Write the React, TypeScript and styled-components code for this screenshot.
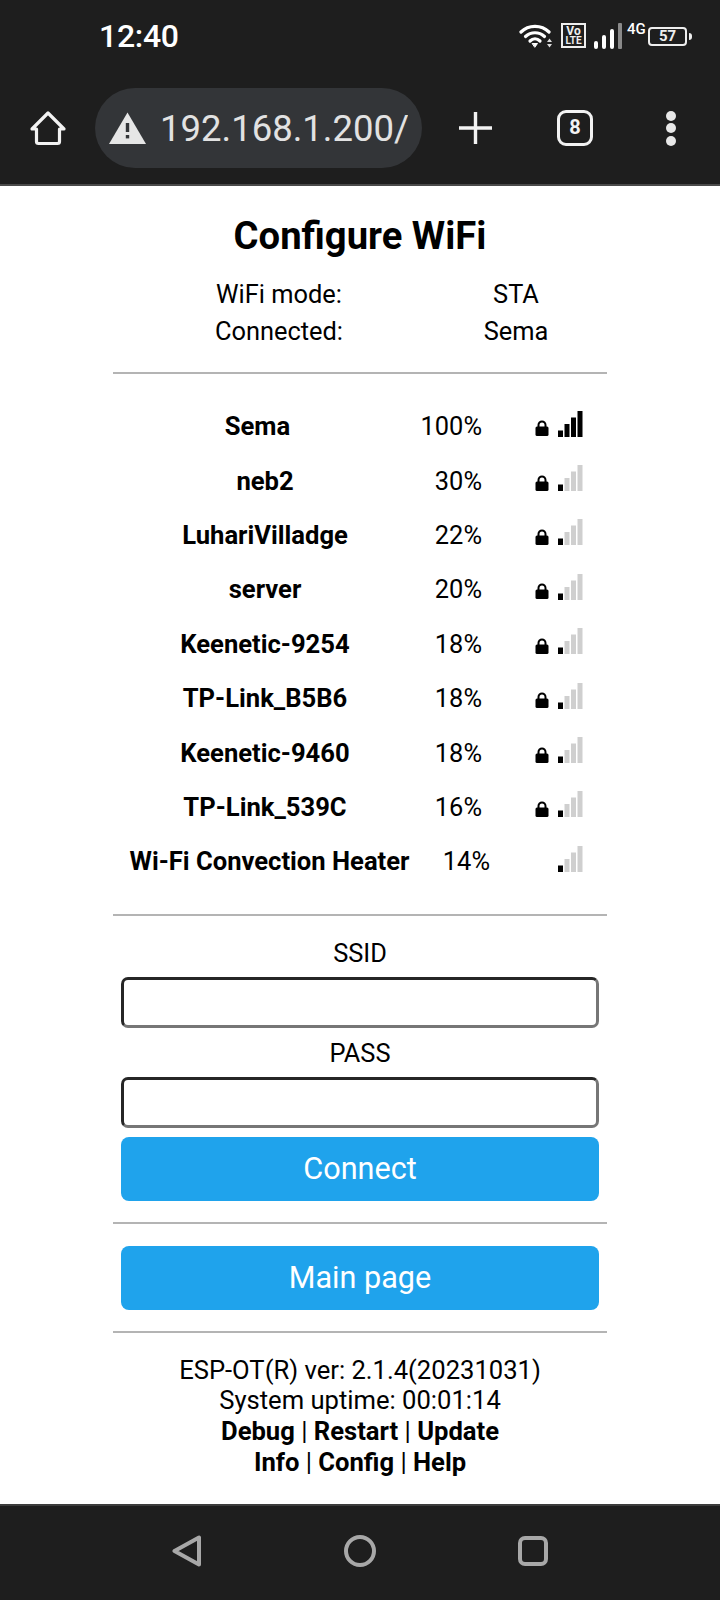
import React from 'react';
import styled, { createGlobalStyle } from 'styled-components';

const networks = [
  { name: 'Sema', level: 100, bars: 4, locked: true, columns: '257px 96px 76px' },
  { name: 'neb2', level: 30, bars: 1, locked: true },
  { name: 'LuhariVilladge', level: 22, bars: 1, locked: true },
  { name: 'server', level: 20, bars: 1, locked: true },
  { name: 'Keenetic-9254', level: 18, bars: 1, locked: true },
  { name: 'TP-Link_B5B6', level: 18, bars: 1, locked: true },
  { name: 'Keenetic-9460', level: 18, bars: 1, locked: true },
  { name: 'TP-Link_539C', level: 16, bars: 1, locked: true },
  { name: 'Wi-Fi Convection Heater', level: 14, bars: 1, locked: false, columns: '281px 80px 68px' },
];

function StatusIcons(): JSX.Element {
  return (
    <StatusRight>
      <WifiIcon width="34" height="24" viewBox="0 0 34 24" fill="none" stroke="#fff" strokeLinecap="round">
        <path d="M2 8C9.5 0.5 22.5 0.5 30 8" strokeWidth="3.2" />
        <path d="M6.5 12.5C12 7.5 20 7.5 25.5 12.5" strokeWidth="3.2" />
        <path d="M11 17C14 14 18 14 21 17" strokeWidth="3.2" />
        <path d="M13.5 19.5h5l-2.5 3.5z" fill="#fff" strokeWidth="1" />
        <path d="M28 18l2.5-3.5 2.5 3.5zM28 20l2.5 3.5 2.5-3.5z" fill="#ddd" stroke="none" />
      </WifiIcon>
      <VoLte>
        <span>Vo</span>
        <small>LTE</small>
      </VoLte>
      <svg width="28" height="26" viewBox="0 0 28 26">
        <rect x="0" y="18" width="4" height="8" rx="2" fill="#fff" />
        <rect x="8" y="12" width="4" height="14" rx="2" fill="#fff" />
        <rect x="16" y="6" width="4" height="20" rx="2" fill="#fff" />
        <rect x="24" y="0" width="4" height="26" rx="1" fill="#8a8a8a" />
      </svg>
      <FourG>4G</FourG>
      <Battery>
        <BatteryBody>57</BatteryBody>
        <BatteryTip />
      </Battery>
    </StatusRight>
  );
}

function LockIcon(): JSX.Element {
  return (
    <svg width="14" height="16" viewBox="0 0 14 16">
      <path d="M3.5 7V5a3.5 3.5 0 0 1 7 0v2" fill="none" stroke="#000" strokeWidth="2" />
      <rect x="0.5" y="6.5" width="13" height="9.5" rx="1.5" fill="#000" />
    </svg>
  );
}

function SignalBars({ bars }: { bars: number }): JSX.Element {
  return (
    <BarsIcon width="25" height="26" viewBox="0 0 25 26">
      {[0, 1, 2, 3].map((i) => (
        <rect
          key={i}
          x={i * 6.5}
          y={19.5 - i * 6.5}
          width="5"
          height={6.5 + i * 6.5}
          fill={i < bars ? '#000' : '#cfcfcf'}
        />
      ))}
    </BarsIcon>
  );
}

export default function App(): JSX.Element {
  return (
    <Screen>
      <GlobalStyle />
      <TopBar>
        <StatusBar>
          <Clock>12:40</Clock>
          <StatusIcons />
        </StatusBar>
        <Toolbar>
          <IconSlot>
            <svg width="38" height="38" viewBox="0 0 38 38" fill="none" stroke="#f2f2f2" strokeWidth="3.2" strokeLinejoin="round" strokeLinecap="round">
              <path d="M19 4L3 20h4.5v12.5a2 2 0 0 0 2 2h19a2 2 0 0 0 2-2V20H35z" />
            </svg>
          </IconSlot>
          <Omnibox>
            <svg width="37" height="32" viewBox="0 0 37 32">
              <path d="M18.5 0.5L37 32H0z" fill="#e6e6e6" />
              <rect x="16.8" y="11" width="3.4" height="9" fill="#333538" />
              <rect x="16.8" y="23" width="3.4" height="3.4" fill="#333538" />
            </svg>
            <Url>192.168.1.200/</Url>
          </Omnibox>
          <PlusIcon>
            <svg width="33" height="32" viewBox="0 0 33 32" stroke="#f2f2f2" strokeWidth="3.4">
              <path d="M16.5 0v32M0 16h33" />
            </svg>
          </PlusIcon>
          <TabCount>8</TabCount>
          <MenuDots>
            <i />
            <i />
            <i />
          </MenuDots>
        </Toolbar>
      </TopBar>

      <Page>
        <Title>Configure WiFi</Title>
        <InfoRow>
          <span>WiFi mode:</span>
          <span>STA</span>
        </InfoRow>
        <InfoRow>
          <span>Connected:</span>
          <span>Sema</span>
        </InfoRow>
        <Rule $top={22} $bottom={0} />
        <NetworkList>
          {networks.map((n) => (
            <NetworkRow key={n.name + n.level} $columns={n.columns}>
              <NetworkName>{n.name}</NetworkName>
              <Percent>{n.level}%</Percent>
              <LockSlot>{n.locked && <LockIcon />}</LockSlot>
              <SignalBars bars={n.bars} />
            </NetworkRow>
          ))}
        </NetworkList>
        <Rule $top={0} $bottom={12} />
        <Form>
          <FieldLabel>SSID</FieldLabel>
          <TextField type="text" />
          <FieldLabel>PASS</FieldLabel>
          <TextField type="password" />
          <BlueButton type="button">Connect</BlueButton>
        </Form>
        <Rule $top={21} $bottom={13} />
        <Form>
          <BlueButton type="button">Main page</BlueButton>
        </Form>
        <Rule $top={21} $bottom={22} />
        <Footer>
          <div>ESP-OT(R) ver: 2.1.4(20231031)</div>
          <div>System uptime: 00:01:14</div>
          <div>
            <b>Debug</b> | <b>Restart</b> | <b>Update</b>
          </div>
          <div>
            <b>Info</b> | <b>Config</b> | <b>Help</b>
          </div>
        </Footer>
      </Page>

      <NavBar>
        <svg width="30" height="32" viewBox="0 0 30 32" fill="none" stroke="#a8a8a8" strokeWidth="4" strokeLinejoin="round">
          <path d="M27 2.5v27L2.5 16z" />
        </svg>
        <svg width="32" height="32" viewBox="0 0 32 32" fill="none" stroke="#a8a8a8" strokeWidth="4">
          <circle cx="16" cy="16" r="14" />
        </svg>
        <svg width="30" height="30" viewBox="0 0 30 30" fill="none" stroke="#a8a8a8" strokeWidth="4">
          <rect x="2" y="2" width="26" height="26" rx="5" />
        </svg>
      </NavBar>
    </Screen>
  );
}

const GlobalStyle = createGlobalStyle`
  html, body {
    margin: 0;
    padding: 0;
    background: #fff;
  }
  * {
    box-sizing: border-box;
  }
`;

const Screen = styled.div`
  width: 720px;
  height: 1600px;
  display: flex;
  flex-direction: column;
  font-family: Roboto, "Liberation Sans", sans-serif;
  color: #000;
  background: #fff;
  overflow: hidden;
`;

const TopBar = styled.header`
  height: 186px;
  flex: none;
  background: #1e1e1e;
  border-bottom: 2px solid #4a4a4a;
  display: flex;
  flex-direction: column;
`;

const StatusBar = styled.div`
  height: 88px;
  padding: 22px 28px 0 99px;
  display: flex;
  justify-content: space-between;
  align-items: flex-start;
`;

const Clock = styled.div`
  font-size: 32px;
  font-weight: 500;
  line-height: 29px;
  letter-spacing: -0.3px;
  color: #fff;
`;

const StatusRight = styled.div`
  display: flex;
  align-items: flex-start;
  margin-top: 1px;
`;

const WifiIcon = styled.svg`
  margin: 1px 8px 0 0;
`;

const VoLte = styled.div`
  width: 25px;
  height: 25px;
  margin-right: 8px;
  border: 2px solid #eee;
  display: flex;
  flex-direction: column;
  align-items: center;
  justify-content: center;
  color: #eee;
  font-size: 12px;
  line-height: 10px;
  font-weight: 700;

  small {
    font-size: 10px;
    line-height: 9px;
  }
`;

const FourG = styled.div`
  width: 18px;
  margin: 0 3px 0 5px;
  font-size: 15px;
  font-weight: 500;
  color: #fff;
  line-height: 12px;
  white-space: nowrap;
`;

const Battery = styled.div`
  display: flex;
  align-items: center;
  margin-top: 4px;
`;

const BatteryBody = styled.div`
  width: 39px;
  height: 19px;
  border: 2px solid #eee;
  border-radius: 4px;
  color: #eee;
  font-size: 15px;
  font-weight: 700;
  line-height: 15px;
  text-align: center;
`;

const BatteryTip = styled.div`
  width: 3px;
  height: 7px;
  margin-left: 2px;
  background: #eee;
  border-radius: 0 3px 3px 0;
`;

const Toolbar = styled.div`
  height: 80px;
  display: flex;
  align-items: center;
`;

const IconSlot = styled.div`
  width: 95px;
  display: flex;
  justify-content: center;
`;

const Omnibox = styled.div`
  width: 327px;
  height: 80px;
  border-radius: 40px;
  background: #333538;
  padding-left: 14px;
  display: flex;
  align-items: center;
  gap: 14px;
`;

const Url = styled.div`
  width: 248px;
  overflow: hidden;
  font-size: 36.5px;
  color: #e2e2e2;
  white-space: nowrap;
`;

const PlusIcon = styled.div`
  width: 33px;
  margin-left: 37px;
  display: flex;
`;

const TabCount = styled.div`
  width: 36px;
  height: 36px;
  margin-left: 65px;
  border: 3.5px solid #f2f2f2;
  border-radius: 9px;
  color: #f2f2f2;
  font-size: 20px;
  font-weight: 700;
  line-height: 29px;
  text-align: center;
`;

const MenuDots = styled.div`
  margin-left: 73px;
  display: flex;
  flex-direction: column;
  gap: 2.5px;

  i {
    display: block;
    width: 10px;
    height: 10px;
    border-radius: 50%;
    background: #e8e8e8;
  }
`;

const Page = styled.main`
  flex: 1;
  width: 494px;
  margin-left: 113px;
  display: flex;
  flex-direction: column;
  align-items: stretch;
`;

const Title = styled.h1`
  margin: 28px 0 18px;
  font-size: 38.2px;
  line-height: 44px;
  font-weight: 700;
  text-align: center;
`;

const InfoRow = styled.div`
  display: grid;
  grid-template-columns: 252px 222px;
  height: 37px;
  padding-left: 40px;
  font-size: 25.4px;
  line-height: 37px;
  text-align: center;
`;

const Rule = styled.hr<{ $top: number; $bottom: number }>`
  width: 100%;
  height: 2px;
  flex: none;
  border: 0;
  background: #b4b4b4;
  margin: ${({ $top }) => $top}px 0 ${({ $bottom }) => $bottom}px;
`;

const NetworkList = styled.div`
  display: flex;
  flex-direction: column;
  padding: 25px 0;
`;

const NetworkRow = styled.div<{ $columns?: string }>`
  height: 54.4px;
  display: grid;
  grid-template-columns: ${({ $columns }) => $columns ?? '272px 81px 76px'} 25px;
  align-items: center;
  padding-left: 16px;
  font-size: 25.4px;
`;

const NetworkName = styled.div`
  font-weight: 700;
  font-size: 25.6px;
  text-align: center;
  white-space: nowrap;
`;

const Percent = styled.div`
  text-align: right;
`;

const LockSlot = styled.div`
  display: flex;
  justify-content: flex-end;
  padding: 4px 9px 0 0;
`;

const BarsIcon = styled.svg`
  margin-top: -5px;
`;

const Form = styled.div`
  padding: 0 8px;
  display: flex;
  flex-direction: column;
`;

const FieldLabel = styled.label`
  height: 49px;
  font-size: 25.4px;
  line-height: 50px;
  text-align: center;
`;

const TextField = styled.input`
  height: 51px;
  width: 100%;
  margin: 0;
  background: #fff;
  border: 3px solid;
  border-color: #262626 #767676 #767676 #262626;
  border-radius: 7px;
  outline: none;
`;

const BlueButton = styled.button`
  height: 64px;
  width: 100%;
  margin-top: 9px;
  border: 0;
  border-radius: 8px;
  background: #1fa3ec;
  color: #fff;
  font-family: inherit;
  font-size: 30.6px;
  padding: 0;
`;

const Footer = styled.div`
  font-size: 25.6px;
  line-height: 30.7px;
  text-align: center;

  b {
    font-weight: 700;
  }
`;

const NavBar = styled.nav`
  height: 96px;
  flex: none;
  background: #1e1e1e;
  border-top: 2px solid #3c3c3c;
  padding: 0 172px 4px 172px;
  display: flex;
  align-items: center;
  justify-content: space-between;
`;
